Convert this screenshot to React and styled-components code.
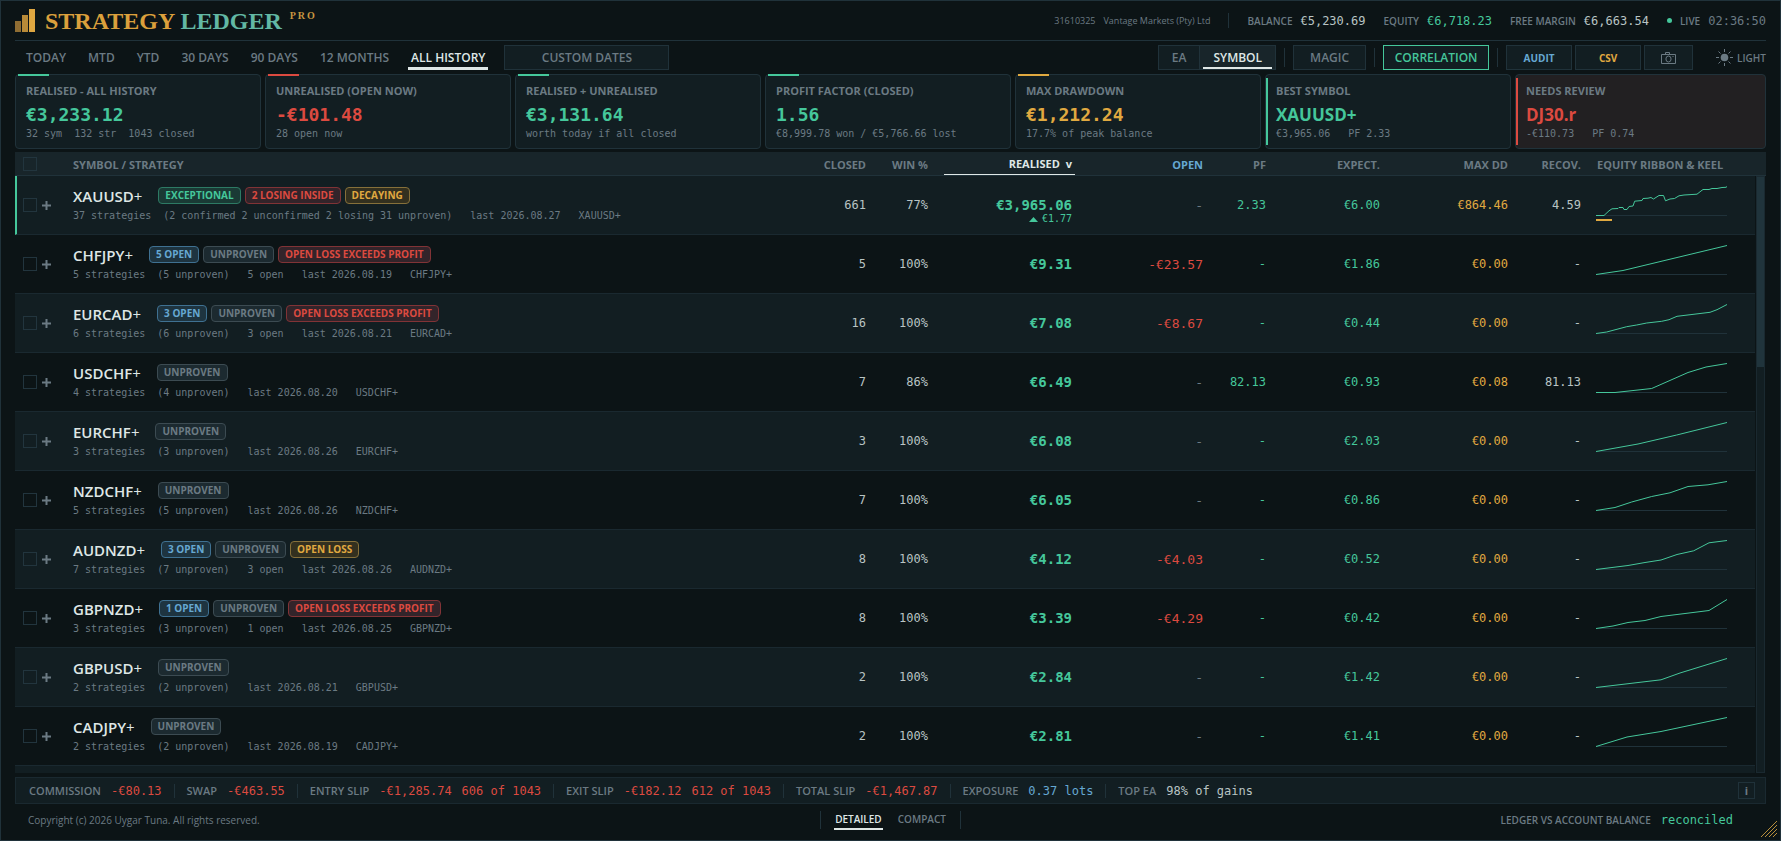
import { useState } from 'react';
import styled, { createGlobalStyle, css } from 'styled-components';

const color = {
  bg: '#0c1416',
  panel: '#121e22',
  head: '#18252a',
  line: '#20323a',
  softLine: '#1a2930',
  muted: '#6b7a83',
  text: '#dfe7e6',
  value: '#b9c4c4',
  green: '#45c79b',
  red: '#dc4a40',
  gold: '#e0a940',
  blue: '#66a8d2',
};

const tones = {
  green: { fg: color.green, bg: '#1a3a35', line: '#2d7a64' },
  red: { fg: color.red, bg: '#33242a', line: '#813336' },
  gold: { fg: color.gold, bg: '#33301f', line: '#86703a' },
  blue: { fg: color.blue, bg: '#1e3440', line: '#3f7192' },
  muted: { fg: color.muted, bg: '#1c2a30', line: '#3c4b52' },
};

const periods = ['TODAY', 'MTD', 'YTD', '30 DAYS', '90 DAYS', '12 MONTHS', 'ALL HISTORY'];

const cards = [
  { title: 'REALISED - ALL HISTORY', value: '€3,233.12', note: '32 sym  132 str  1043 closed', tone: 'green' },
  { title: 'UNREALISED (OPEN NOW)', value: '-€101.48', note: '28 open now', tone: 'red' },
  { title: 'REALISED + UNREALISED', value: '€3,131.64', note: 'worth today if all closed', tone: 'green' },
  { title: 'PROFIT FACTOR (CLOSED)', value: '1.56', note: '€8,999.78 won / €5,766.66 lost', tone: 'green' },
  { title: 'MAX DRAWDOWN', value: '€1,212.24', note: '17.7% of peak balance', tone: 'gold' },
  { title: 'BEST SYMBOL', value: 'XAUUSD+', note: '€3,965.06   PF 2.33', tone: 'green', side: true },
  { title: 'NEEDS REVIEW', value: 'DJ30.r', note: '-€110.73   PF 0.74', tone: 'red', side: true, warn: true },
];

const rows = [
  {
    symbol: 'XAUUSD',
    badges: [['EXCEPTIONAL', 'green'], ['2 LOSING INSIDE', 'red'], ['DECAYING', 'gold']],
    count: '37 strategies',
    mix: '(2 confirmed 2 unconfirmed 2 losing 31 unproven)',
    last: '2026.08.27',
    closed: '661', win: '77%', realised: '€3,965.06', delta: '€1.77', open: '-', pf: '2.33',
    expect: '€6.00', dd: '€864.46', recov: '4.59', keel: 16, best: true,
    curve: '0,30.5 8,30.5 13,25.8 16,23.8 22,23.5 23,22.5 27,22.5 28,24.5 31,24.5 33,21.5 37,21 38.7,16.2 46,15.5 47,13.5 52,13.2 55,12.5 57.5,14 63,10.5 67.5,10.5 69.5,15.8 74,14 78.5,13.5 83,10.8 88,10 101,9.2 105,6 107,4.5 113,4.5 116,3.5 121,3.5 126,2.5 130,2.3 131,1.5',
  },
  {
    symbol: 'CHFJPY',
    badges: [['5 OPEN', 'blue'], ['UNPROVEN', 'muted'], ['OPEN LOSS EXCEEDS PROFIT', 'red']],
    count: '5 strategies', mix: '(5 unproven)', openCount: '5 open', last: '2026.08.19',
    closed: '5', win: '100%', realised: '€9.31', open: '-€23.57', pf: '-',
    expect: '€1.86', dd: '€0.00', recov: '-',
    curve: '0,30.5 27,26.5 131,1.5',
  },
  {
    symbol: 'EURCAD',
    badges: [['3 OPEN', 'blue'], ['UNPROVEN', 'muted'], ['OPEN LOSS EXCEEDS PROFIT', 'red']],
    count: '6 strategies', mix: '(6 unproven)', openCount: '3 open', last: '2026.08.21',
    closed: '16', win: '100%', realised: '€7.08', open: '-€8.67', pf: '-',
    expect: '€0.44', dd: '€0.00', recov: '-',
    curve: '0,30.5 10.7,29 30.7,23.7 40.7,22 50.7,20 65.7,18.3 73,16.7 81,13.3 114,9.3 121,6.7 131,1.5',
  },
  {
    symbol: 'USDCHF',
    badges: [['UNPROVEN', 'muted']],
    count: '4 strategies', mix: '(4 unproven)', last: '2026.08.20',
    closed: '7', win: '86%', realised: '€6.49', open: '-', pf: '82.13',
    expect: '€0.93', dd: '€0.08', recov: '81.13',
    curve: '0,30.5 19,30.5 55.7,26.5 92,10.5 110,5 131,1.5',
  },
  {
    symbol: 'EURCHF',
    badges: [['UNPROVEN', 'muted']],
    count: '3 strategies', mix: '(3 unproven)', last: '2026.08.26',
    closed: '3', win: '100%', realised: '€6.08', open: '-', pf: '-',
    expect: '€2.03', dd: '€0.00', recov: '-',
    curve: '0,30.5 42,23 80.7,14 131,1.5',
  },
  {
    symbol: 'NZDCHF',
    badges: [['UNPROVEN', 'muted']],
    count: '5 strategies', mix: '(5 unproven)', last: '2026.08.26',
    closed: '7', win: '100%', realised: '€6.05', open: '-', pf: '-',
    expect: '€0.86', dd: '€0.00', recov: '-',
    curve: '0,30.5 19,27.5 35.7,22 55.7,16.5 74,12.8 92,6.5 112,4.8 131,1.5',
  },
  {
    symbol: 'AUDNZD',
    badges: [['3 OPEN', 'blue'], ['UNPROVEN', 'muted'], ['OPEN LOSS', 'gold']],
    count: '7 strategies', mix: '(7 unproven)', openCount: '3 open', last: '2026.08.26',
    closed: '8', win: '100%', realised: '€4.12', open: '-€4.03', pf: '-',
    expect: '€0.52', dd: '€0.00', recov: '-',
    curve: '0,30.5 32,26.5 49,23.5 65,21 81,15.5 97.7,11.8 113,3.8 131,1.5',
  },
  {
    symbol: 'GBPNZD',
    badges: [['1 OPEN', 'blue'], ['UNPROVEN', 'muted'], ['OPEN LOSS EXCEEDS PROFIT', 'red']],
    count: '3 strategies', mix: '(3 unproven)', openCount: '1 open', last: '2026.08.25',
    closed: '8', win: '100%', realised: '€3.39', open: '-€4.29', pf: '-',
    expect: '€0.42', dd: '€0.00', recov: '-',
    curve: '0,30.5 17,28 32,24.5 49,22.5 65,18.5 113,12.5 131,1.5',
  },
  {
    symbol: 'GBPUSD',
    badges: [['UNPROVEN', 'muted']],
    count: '2 strategies', mix: '(2 unproven)', last: '2026.08.21',
    closed: '2', win: '100%', realised: '€2.84', open: '-', pf: '-',
    expect: '€1.42', dd: '€0.00', recov: '-',
    curve: '0,30.5 65,22.8 84,16 131,1.5',
  },
  {
    symbol: 'CADJPY',
    badges: [['UNPROVEN', 'muted']],
    count: '2 strategies', mix: '(2 unproven)', last: '2026.08.19',
    closed: '2', win: '100%', realised: '€2.81', open: '-', pf: '-',
    expect: '€1.41', dd: '€0.00', recov: '-',
    curve: '0,30.5 31,21 65,15.5 131,1.5',
  },
];

const costs = [
  { label: 'COMMISSION', values: ['-€80.13'], tone: color.red },
  { label: 'SWAP', values: ['-€463.55'], tone: color.red },
  { label: 'ENTRY SLIP', values: ['-€1,285.74', '606 of 1043'], tone: color.red },
  { label: 'EXIT SLIP', values: ['-€182.12', '612 of 1043'], tone: color.red },
  { label: 'TOTAL SLIP', values: ['-€1,467.87'], tone: color.red },
  { label: 'EXPOSURE', values: ['0.37 lots'], tone: color.blue },
  { label: 'TOP EA', values: ['98% of gains'], tone: color.value },
];

const CameraIcon = () => (
  <svg width="17" height="14" viewBox="0 0 17 14" fill="none" stroke="currentColor" aria-hidden="true">
    <path d="M1.5 3.5h14v9h-14z" />
    <path d="M5.5 3.5v-2h4v2" />
    <ellipse cx="8.5" cy="8" rx="2.6" ry="3" />
    <path d="M12.5 5.5h1" />
  </svg>
);

const SunIcon = () => (
  <svg width="17" height="17" viewBox="0 0 17 17" stroke="currentColor" aria-hidden="true">
    <circle cx="8.5" cy="8.5" r="3.8" fill="currentColor" stroke="none" />
    <path d="M8.5 0v3M8.5 14v3M0 8.5h3M14 8.5h3M2.5 2.5l2 2M12.5 12.5l2 2M2.5 14.5l2-2M12.5 4.5l2-2" />
  </svg>
);

const Sparkline = ({ curve, keel }) => (
  <Chart width="131" height="40" viewBox="0 0 131 40" fill="none" role="img" aria-label="Equity curve">
    <path d="M0 30.5h131" stroke={color.line} />
    <polyline points={curve} stroke={color.green} />
    {keel && <rect x="0" y="34" width={keel} height="2" fill={color.gold} />}
  </Chart>
);

const Row = ({ row }) => (
  <BodyRow>
    <CheckCell $best={row.best}>
      <CheckGroup>
        <Checkbox type="checkbox" aria-label={`Select ${row.symbol}+`} />
        <Expand type="button" aria-label={`Expand ${row.symbol}+`}>
          <svg width="9" height="9" viewBox="0 0 9 9" stroke="currentColor" strokeWidth="2" aria-hidden="true">
            <path d="M4.5 0v9M0 4.5h9" />
          </svg>
        </Expand>
      </CheckGroup>
    </CheckCell>
    <NameCell>
      <NameLine>
        <SymbolName>
          {row.symbol}
          <span>+</span>
        </SymbolName>
        {row.badges.map(([text, tone]) => (
          <Badge key={text} $tone={tones[tone]}>
            {text}
          </Badge>
        ))}
      </NameLine>
      <Detail>
        <DetailPair>
          <span>{row.count}</span>
          <span>{row.mix}</span>
        </DetailPair>
        {row.openCount && <span>{row.openCount}</span>}
        <span>last {row.last}</span>
        <span>{row.symbol}+</span>
      </Detail>
    </NameCell>
    <Cell>{row.closed}</Cell>
    <Cell>{row.win}</Cell>
    <Cell>
      <Realised>
        <strong>{row.realised}</strong>
        {row.delta && (
          <Delta>
            <svg width="9" height="5" viewBox="0 0 9 5" fill="currentColor" aria-hidden="true">
              <path d="M0 5L4.5 0 9 5z" />
            </svg>
            {row.delta}
          </Delta>
        )}
      </Realised>
    </Cell>
    <Cell $large $color={row.open === '-' ? color.muted : color.red}>{row.open}</Cell>
    <Cell $color={color.green}>{row.pf}</Cell>
    <Cell $color={color.green}>{row.expect}</Cell>
    <Cell $color={color.gold}>{row.dd}</Cell>
    <Cell>{row.recov}</Cell>
    <ChartCell>
      <Sparkline curve={row.curve} keel={row.keel} />
    </ChartCell>
  </BodyRow>
);

export default function App() {
  const [period, setPeriod] = useState('ALL HISTORY');
  const [group, setGroup] = useState('SYMBOL');
  const [density, setDensity] = useState('DETAILED');

  return (
    <>
      <GlobalStyle />
      <Page>
        <Header>
          <Brand>
            <svg width="20" height="23" viewBox="0 0 20 23" aria-hidden="true">
              <path d="M0 12h6v11H0z" fill="#8f6d33" />
              <path d="M7 6h6v17H7z" fill="#b88a38" />
              <path d="M14 0h6v23h-6z" fill="#dfa741" />
            </svg>
            <Title>
              STRATEGY <span>LEDGER</span>
            </Title>
            <Pro>PRO</Pro>
          </Brand>
          <Account>
            <Broker>
              <span>31610325</span>
              <span>Vantage Markets (Pty) Ltd</span>
            </Broker>
            <Divider $height={15} />
            <Stat>
              BALANCE <Mono>€5,230.69</Mono>
            </Stat>
            <Stat>
              EQUITY <Mono $color={color.green}>€6,718.23</Mono>
            </Stat>
            <Stat>
              FREE MARGIN <Mono>€6,663.54</Mono>
            </Stat>
            <Stat>
              <LiveDot />
              LIVE <Mono $color={color.muted}>02:36:50</Mono>
            </Stat>
          </Account>
        </Header>

        <Toolbar>
          <Periods>
            {periods.map((name) => (
              <Tab key={name} type="button" $active={name === period} onClick={() => setPeriod(name)}>
                {name}
              </Tab>
            ))}
            <BoxButton type="button" $width={165}>
              CUSTOM DATES
            </BoxButton>
          </Periods>
          <Tools>
            <Segment>
              {['EA', 'SYMBOL'].map((name) => (
                <SegmentButton key={name} type="button" $active={name === group} onClick={() => setGroup(name)}>
                  <span>{name}</span>
                </SegmentButton>
              ))}
            </Segment>
            <Divider $height={19} />
            <BoxButton type="button" $width={73}>
              MAGIC
            </BoxButton>
            <Divider $height={19} />
            <BoxButton type="button" $width={106} $color={color.green} $border={color.green}>
              CORRELATION
            </BoxButton>
            <Divider $height={19} />
            <Exports>
              <BoxButton type="button" $small $width={66} $color={color.blue}>
                AUDIT
              </BoxButton>
              <BoxButton type="button" $small $width={66} $color={color.gold}>
                CSV
              </BoxButton>
              <BoxButton type="button" $width={49} aria-label="Screenshot">
                <CameraIcon />
              </BoxButton>
            </Exports>
            <ThemeButton type="button">
              <SunIcon />
              LIGHT
            </ThemeButton>
          </Tools>
        </Toolbar>

        <Cards>
          {cards.map((card) => (
            <Card key={card.title} $warn={card.warn} $side={card.side} $accent={tones[card.tone].fg}>
              <h2>{card.title}</h2>
              <CardValue $side={card.side} $color={tones[card.tone].fg}>
                {card.value}
              </CardValue>
              <CardNote>{card.note}</CardNote>
            </Card>
          ))}
        </Cards>

        <TableArea>
          <TableClip>
            <Table>
              <colgroup>
                <Col $width={58} />
                <Col />
                <Col $width={80} />
                <Col $width={62} />
                <Col $width={144} />
                <Col $width={131} />
                <Col $width={63} />
                <Col $width={114} />
                <Col $width={128} />
                <Col $width={73} />
                <Col $width={171} />
              </colgroup>
              <thead>
                <tr>
                  <HeadCell $check>
                    <Checkbox type="checkbox" aria-label="Select all" />
                  </HeadCell>
                  <HeadCell $left>SYMBOL / STRATEGY</HeadCell>
                  <HeadCell>CLOSED</HeadCell>
                  <HeadCell>WIN %</HeadCell>
                  <HeadCell $sorted aria-sort="descending">
                    <SortButton type="button">
                      REALISED <span>v</span>
                    </SortButton>
                  </HeadCell>
                  <HeadCell $color={color.blue}>OPEN</HeadCell>
                  <HeadCell>PF</HeadCell>
                  <HeadCell>EXPECT.</HeadCell>
                  <HeadCell>MAX DD</HeadCell>
                  <HeadCell>RECOV.</HeadCell>
                  <HeadCell $chart>EQUITY RIBBON &amp; KEEL</HeadCell>
                </tr>
              </thead>
              <tbody>
                {rows.map((row) => (
                  <Row key={row.symbol} row={row} />
                ))}
                <BodyRow>
                  <Cell colSpan={11} />
                </BodyRow>
              </tbody>
            </Table>
          </TableClip>
          <ScrollColumn>
            <ScrollCap />
            <ScrollTrack>
              <ScrollThumb />
            </ScrollTrack>
          </ScrollColumn>
        </TableArea>

        <CostBar>
          {costs.map((item) => (
            <Cost key={item.label}>
              <Label>{item.label}</Label>
              <CostValues>
                {item.values.map((value) => (
                  <Mono key={value} $color={item.tone}>
                    {value}
                  </Mono>
                ))}
              </CostValues>
            </Cost>
          ))}
          <InfoButton type="button" aria-label="About costs">
            i
          </InfoButton>
        </CostBar>

        <Footer>
          <Copyright>Copyright (c) 2026 Uygar Tuna. All rights reserved.</Copyright>
          <Density>
            {['DETAILED', 'COMPACT'].map((name) => (
              <DensityButton key={name} type="button" $active={name === density} onClick={() => setDensity(name)}>
                {name}
              </DensityButton>
            ))}
          </Density>
          <Reconcile>
            LEDGER VS ACCOUNT BALANCE <Mono $color={color.green}>reconciled</Mono>
          </Reconcile>
        </Footer>
        <Grip width="16" height="16" viewBox="0 0 16 16" stroke="#b98f3c" strokeWidth="1" aria-hidden="true">
          <path d="M0 16L16 0M4 16L16 4M8 16L16 8M12 16l4-4" />
        </Grip>
      </Page>
    </>
  );
}

const sans = `'Open Sans', 'Noto Sans', sans-serif`;
const mono = `'DejaVu Sans Mono', 'Liberation Mono', monospace`;

const GlobalStyle = createGlobalStyle`
  * {
    box-sizing: border-box;
  }
  body {
    margin: 0;
    background: ${color.bg};
    color: ${color.muted};
    font-family: ${sans};
    font-size: 10px;
    font-weight: 600;
  }
  button {
    padding: 0;
    border: none;
    background: none;
    color: inherit;
    font: inherit;
    cursor: pointer;
  }
  h1, h2, p {
    margin: 0;
  }
`;

const Page = styled.div`
  position: relative;
  display: flex;
  flex-direction: column;
  height: 100vh;
  padding: 0 14px;
  border: 1px solid ${color.line};
  overflow: hidden;
`;

const Header = styled.header`
  display: flex;
  justify-content: space-between;
  align-items: center;
  flex: none;
  height: 40px;
  border-bottom: 1px solid ${color.line};
`;

const Brand = styled.div`
  display: flex;
  align-items: center;
`;

const Title = styled.h1`
  margin-left: 10px;
  color: #dba03c;
  font-family: 'Liberation Serif', serif;
  font-size: 24px;
  font-weight: 700;
  line-height: 24px;

  span {
    color: #62b8a4;
  }
`;

const Pro = styled.sup`
  align-self: flex-start;
  margin-left: 8px;
  color: #c89640;
  font-family: 'Liberation Serif', serif;
  font-size: 10px;
  font-weight: 700;
  line-height: 14px;
  letter-spacing: 2px;
`;

const Account = styled.div`
  display: flex;
  align-items: center;
  gap: 18px;
`;

const Broker = styled.div`
  display: flex;
  gap: 8px;
  font-size: 9px;
  font-weight: 400;
`;

const Divider = styled.span`
  width: 1px;
  height: ${({ $height }) => $height}px;
  background: ${color.line};
`;

const Stat = styled.div`
  display: flex;
  align-items: center;
  gap: 8px;
  white-space: nowrap;
`;

const Mono = styled.span`
  color: ${({ $color }) => $color || color.value};
  font-family: ${mono};
  font-size: 12px;
  font-weight: 400;
  white-space: pre;
`;

const LiveDot = styled.span`
  width: 5px;
  height: 5px;
  border-radius: 50%;
  background: ${color.green};
`;

const Toolbar = styled.nav`
  display: flex;
  justify-content: space-between;
  align-items: center;
  flex: none;
  height: 33px;
  font-size: 12px;
`;

const Periods = styled.div`
  display: flex;
  align-items: center;
  padding-left: 8px;
  gap: 16px;
`;

const Tab = styled.button`
  height: 25px;
  padding: 0 3px;
  border-bottom: 3px solid transparent;
  border-top: 3px solid transparent;
  white-space: nowrap;
  ${({ $active }) =>
    $active &&
    css`
      border-bottom-color: ${color.text};
      color: ${color.text};
    `}
`;

const Tools = styled.div`
  display: flex;
  align-items: center;
  gap: 8px;
`;

const BoxButton = styled.button`
  display: flex;
  justify-content: center;
  align-items: center;
  width: ${({ $width }) => $width}px;
  height: 25px;
  border: 1px solid ${({ $border }) => $border || color.line};
  background: ${color.panel};
  color: ${({ $color }) => $color || color.muted};
  font-size: ${({ $small }) => ($small ? 10 : 12)}px;
  font-weight: ${({ $small }) => ($small ? 700 : 600)};
`;

const Segment = styled.div`
  display: flex;
  height: 25px;
  border: 1px solid ${color.line};
  background: ${color.panel};
`;

const SegmentButton = styled.button`
  padding: 0 3px;

  & + & {
    border-left: 1px solid ${color.line};
  }
  span {
    display: block;
    padding: 3px 10px 0;
    line-height: 18px;
    border-bottom: 2px solid transparent;
  }
  ${({ $active }) =>
    $active &&
    css`
      background: ${color.head};
      color: ${color.text};

      span {
        border-bottom-color: ${color.text};
      }
    `}
`;

const Exports = styled.div`
  display: flex;
  gap: 3px;
`;

const ThemeButton = styled.button`
  display: flex;
  align-items: center;
  gap: 4px;
  margin-left: 15px;
  font-size: 10px;
`;

const Cards = styled.section`
  display: grid;
  grid-template-columns: repeat(6, 246fr) 251fr;
  gap: 4px;
  flex: none;
`;

const Card = styled.article`
  position: relative;
  height: 75px;
  padding: 9px 10px 0;
  border: 1px solid ${color.line};
  border-radius: 4px;
  background: ${({ $warn }) => ($warn ? '#222022' : color.panel)};

  h2 {
    font-size: 11px;
    font-weight: 700;
    line-height: 14px;
  }
  &::before {
    content: '';
    position: absolute;
    background: ${({ $accent }) => $accent};
    ${({ $side }) =>
      $side
        ? css`
            top: 3px;
            bottom: 3px;
            left: 0;
            width: 2px;
          `
        : css`
            top: -1px;
            left: 2px;
            width: 31px;
            height: 2px;
          `}
  }
`;

const CardValue = styled.p`
  margin-top: 6px;
  color: ${({ $color }) => $color};
  font-family: ${({ $side }) => ($side ? sans : mono)};
  font-size: ${({ $side }) => ($side ? 17 : 18)}px;
  font-weight: 700;
  line-height: 22px;
`;

const CardNote = styled.p`
  font-family: ${mono};
  font-size: 10px;
  font-weight: 400;
  line-height: 15px;
  white-space: pre;
`;

const TableArea = styled.section`
  display: flex;
  flex: 1;
  min-height: 0;
  margin-top: 3px;
`;

const TableClip = styled.div`
  flex: 1;
  min-width: 0;
  overflow: hidden;
`;

const Table = styled.table`
  width: 100%;
  table-layout: fixed;
  border-collapse: separate;
  border-spacing: 0;
`;

const Col = styled.col`
  width: ${({ $width }) => ($width ? `${$width}px` : 'auto')};
`;

const HeadCell = styled.th`
  height: 24px;
  padding: 2px 3px 0 0;
  border-bottom: 1px solid ${color.line};
  background: ${color.head};
  color: ${({ $color }) => $color || color.muted};
  font-size: 11px;
  font-weight: 700;
  line-height: 14px;
  text-align: right;
  white-space: nowrap;
  ${({ $left }) => $left && 'text-align: left;'}
  ${({ $check }) => $check && 'padding: 0 0 0 8px; text-align: left; line-height: 0;'}
  ${({ $chart }) => $chart && 'padding-left: 13px; text-align: left;'}
  ${({ $sorted }) => $sorted && 'padding: 0 0 0 13px;'}
`;

const SortButton = styled.button`
  display: block;
  width: 100%;
  height: 23px;
  padding: 2px 3px 0 0;
  border-bottom: 1px solid ${color.text};
  color: ${color.text};
  text-align: right;

  span {
    margin-left: 3px;
  }
`;

const Cell = styled.td`
  height: 59px;
  padding: 0 3px 0 0;
  border-bottom: 1px solid ${color.softLine};
  color: ${({ $color }) => $color || color.value};
  font-family: ${mono};
  font-size: ${({ $large }) => ($large ? 13 : 12)}px;
  font-weight: 400;
  text-align: right;
`;

const BodyRow = styled.tr`
  &:nth-child(odd) {
    background: ${color.panel};
  }
`;

const CheckCell = styled(Cell)`
  padding: 0 0 0 8px;
  ${({ $best }) =>
    $best &&
    css`
      padding-left: 6px;
      border-left: 2px solid ${color.green};
    `}
`;

const CheckGroup = styled.div`
  display: flex;
  align-items: center;
  gap: 5px;
`;

const Checkbox = styled.input`
  appearance: none;
  width: 14px;
  height: 14px;
  margin: 0;
  border: 1px solid #22353e;
`;

const Expand = styled.button`
  display: flex;
  color: ${color.muted};
`;

const NameCell = styled(Cell)`
  padding: 0;
  font-family: ${sans};
  text-align: left;
`;

const NameLine = styled.div`
  display: flex;
  align-items: center;
  gap: 4px;
  height: 18px;
`;

const SymbolName = styled.span`
  margin-right: 12px;
  color: ${color.text};
  font-size: 15px;
  font-weight: 600;

  span {
    font-weight: 400;
  }
`;

const Badge = styled.span`
  padding: 0 6px;
  border: 1px solid ${({ $tone }) => $tone.line};
  border-radius: 4px;
  background: ${({ $tone }) => $tone.bg};
  color: ${({ $tone }) => $tone.fg};
  font-size: 10px;
  font-weight: 700;
  line-height: 15px;
  white-space: nowrap;
`;

const Detail = styled.div`
  display: flex;
  gap: 18px;
  margin-top: 3px;
  color: ${color.muted};
  font-family: ${mono};
  font-size: 10px;
  line-height: 16px;
  white-space: nowrap;
`;

const DetailPair = styled.span`
  display: flex;
  gap: 12px;
`;

const Realised = styled.div`
  display: grid;
  grid-template-rows: 16px 12px;
  padding-top: 12px;
  color: ${color.green};

  strong {
    font-size: 14px;
    line-height: 16px;
  }
`;

const Delta = styled.span`
  display: flex;
  justify-content: flex-end;
  align-items: center;
  gap: 4px;
  font-size: 10px;
  line-height: 18px;
`;

const ChartCell = styled(Cell)`
  padding: 0 0 0 12px;
  text-align: left;
`;

const Chart = styled.svg`
  display: block;
`;

const ScrollColumn = styled.div`
  display: flex;
  flex-direction: column;
  width: 11px;
`;

const ScrollCap = styled.div`
  height: 24px;
  border-bottom: 1px solid ${color.line};
  background: ${color.head};
`;

const ScrollTrack = styled.div`
  flex: 1;
  margin: 0 1px;
  border: 1px solid ${color.softLine};
  background: ${color.panel};
`;

const ScrollThumb = styled.div`
  height: 32%;
  background: #20343c;
`;

const CostBar = styled.section`
  display: flex;
  align-items: center;
  flex: none;
  height: 27px;
  margin-top: 4px;
  padding: 0 10px 0 13px;
  border: 1px solid ${color.softLine};
  background: ${color.panel};
  font-size: 11px;
`;

const Cost = styled.div`
  display: flex;
  align-items: center;
  gap: 10px;

  & + & {
    margin-left: 12px;
    padding-left: 12px;
    border-left: 1px solid ${color.line};
  }
`;

const Label = styled.span`
  line-height: 14px;
`;

const CostValues = styled.span`
  display: flex;
  gap: 10px;
`;

const InfoButton = styled.button`
  width: 17px;
  height: 17px;
  margin-left: auto;
  border: 1px solid ${color.line};
  font-weight: 700;
  line-height: 14px;
`;

const Footer = styled.footer`
  display: grid;
  grid-template-columns: 1fr auto 1fr;
  align-items: center;
  flex: none;
  height: 36px;
  padding: 0 13px 5px;
`;

const Copyright = styled.span`
  font-weight: 400;
`;

const Density = styled.div`
  display: flex;
  gap: 14px;
  height: 18px;
  padding: 0 13px;
  border: solid ${color.line};
  border-width: 0 1px;
`;

const DensityButton = styled.button`
  height: 19px;
  padding: 0 1px;
  border-bottom: 2px solid ${({ $active }) => ($active ? color.text : 'transparent')};
  color: ${({ $active }) => ($active ? color.text : color.muted)};
`;

const Reconcile = styled.span`
  display: flex;
  justify-content: flex-end;
  align-items: center;
  gap: 10px;
  padding-right: 20px;
`;

const Grip = styled.svg`
  position: absolute;
  right: 3px;
  bottom: 3px;
`;
